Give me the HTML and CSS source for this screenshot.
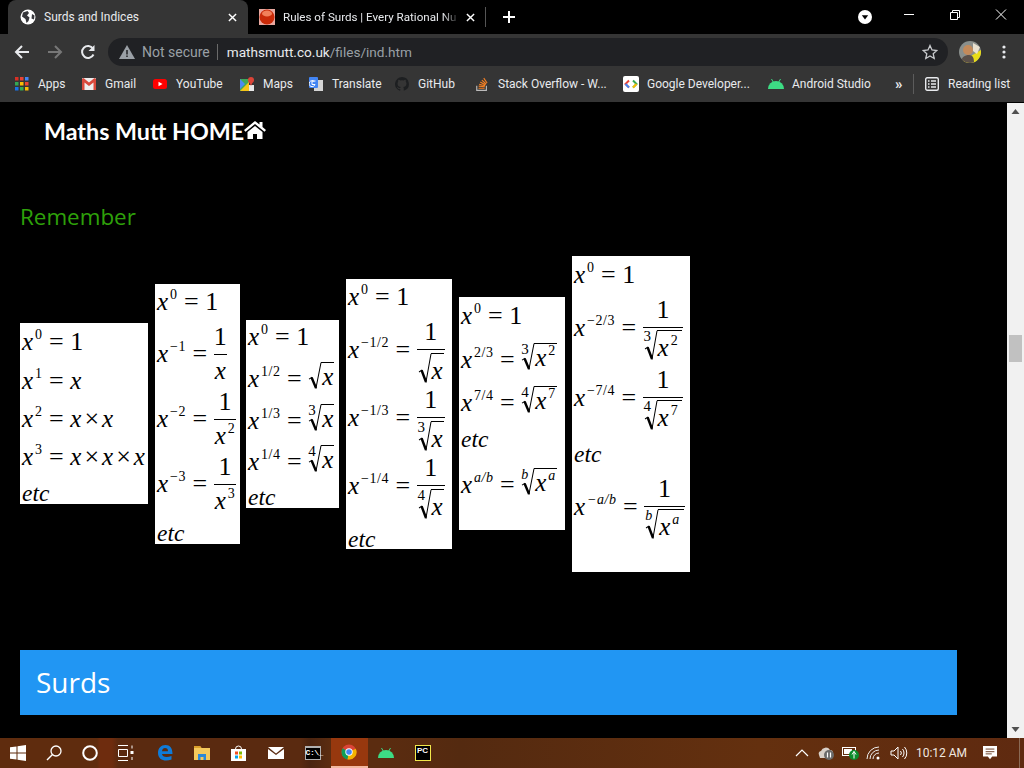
FILE: index.html
```html
<!DOCTYPE html>
<html lang="en">
<head>
<meta charset="utf-8">
<title>Surds and Indices</title>
<link rel="stylesheet" href="styles.css">
</head>
<body>
<svg class="sprite" aria-hidden="true"><defs>
<g id="surd"><path d="M1 16.5 3.6 15 8 25 13 .7" fill="none" stroke="#000" stroke-width="1"/><path d="M3.6 15 8 25" fill="none" stroke="#000" stroke-width="2.4"/></g>
</defs></svg>
<div class="window">
  <div class="tabstrip">
    <div class="tab tab-active">
      <svg class="fav" viewBox="0 0 16 16"><circle cx="8" cy="8" r="7.5" fill="#fff"/><path d="M3 3.5 7.5 2 9 4 7 6.5 9.5 8.5 8.5 12 6.5 14 5.5 10 2 7.5ZM12 5l2.500 1.500L14 10.500 11.500 9.500Z" fill="#35363a"/></svg>
      <span class="tab-title">Surds and Indices</span>
      <svg class="tab-x" viewBox="0 0 10 10"><path d="M1 1l8 8M9 1l-8 8" stroke="#fff" stroke-width="1.600"/></svg>
    </div>
    <div class="tab tab-other">
      <svg class="fav" viewBox="0 0 16 16"><rect width="16" height="16" fill="#e9a8a0"/><circle cx="8" cy="8" r="7.500" fill="#c92a08"/><ellipse cx="8" cy="4.500" rx="5" ry="3" fill="#f2805a"/></svg>
      <span class="tab-title tab-fade">Rules of Surds | Every Rational Nu</span>
      <svg class="tab-x" viewBox="0 0 10 10"><path d="M1 1l8 8M9 1l-8 8" stroke="#fff" stroke-width="1.600"/></svg>
    </div>
    <svg class="newtab" viewBox="0 0 12 12"><path d="M6 0v12M0 6h12" stroke="#fff" stroke-width="2"/></svg>
    <svg class="tabsearch" viewBox="0 0 14 14"><circle cx="7" cy="7" r="7" fill="#fff"/><path d="M3.800 5.200h6.400L7 9.500Z" fill="#000"/></svg>
    <svg class="winbtn" viewBox="0 0 46 30"><path d="M18 14.500h10" stroke="#fff"/></svg>
    <svg class="winbtn" viewBox="0 0 46 30"><path d="M18.500 12.500h7v7h-7zM20.500 12.500v-2h7v7h-2" fill="none" stroke="#fff"/></svg>
    <svg class="winbtn" viewBox="0 0 46 30"><path d="M18 9.500l10 10M28 9.500l-10 10" stroke="#fff"/></svg>
  </div>
  <div class="toolbar">
    <svg class="nav nav-first" viewBox="0 0 16 16"><path d="M15 8H2M8 2 2 8l6 6" fill="none" stroke="#e8eaed" stroke-width="2"/></svg>
    <svg class="nav" viewBox="0 0 16 16"><path d="M1 8h13M8 2l6 6-6 6" fill="none" stroke="#777" stroke-width="2"/></svg>
    <svg class="nav" viewBox="0 0 16 16"><path d="M13.500 10.500A6 6 0 1 1 13 4.500" fill="none" stroke="#e8eaed" stroke-width="2"/><path d="M14.500 1v6h-6z" fill="#e8eaed"/></svg>
    <div class="omnibox">
      <svg class="warn" viewBox="0 0 16 14"><path d="M8 0 16 14H0Z" fill="#9aa0a6"/><path d="M8 5v4.500M8 10.500v1.500" stroke="#202124" stroke-width="1.500"/></svg>
      <span class="notsecure">Not secure</span>
      <span class="omni-sep"></span>
      <span class="url"><b>mathsmutt.co.uk</b>/files/ind.htm</span>
      <svg class="star" viewBox="0 0 16 16"><path d="M8 1.500 10 6l4.800.5-3.600 3.200 1 4.800L8 12l-4.200 2.500 1-4.800L1.200 6.500 6 6Z" fill="none" stroke="#c8cacd" stroke-width="1.300"/></svg>
    </div>
    <svg class="avatar" viewBox="0 0 22 22"><defs><clipPath id="av"><circle cx="11" cy="11" r="11"/></clipPath></defs><g clip-path="url(#av)"><rect width="22" height="22" fill="#8a8f8c"/><path d="M0 22 22 9v13z" fill="#e8dc18"/><circle cx="9" cy="9" r="5" fill="#c48a5a"/><path d="M2 22c0-6 4-8 8-8s5 3 5 8z" fill="#5a4f48"/><path d="M14 2l7 4-3 7-4-3z" fill="#e8e0d0"/></g></svg>
    <svg class="kebab" viewBox="0 0 4 14"><circle cx="2" cy="2" r="1.600" fill="#e8eaed"/><circle cx="2" cy="7" r="1.600" fill="#e8eaed"/><circle cx="2" cy="12" r="1.600" fill="#e8eaed"/></svg>
  </div>
  <div class="bookmarks">
    <div class="bm bm-apps"><svg class="bm-ico" viewBox="0 0 14 14"><g><rect width="3.500" height="3.500" fill="#d93025"/><rect x="5" width="3.500" height="3.500" fill="#ea4335"/><rect x="10" width="3.500" height="3.500" fill="#4285f4"/><rect y="5" width="3.500" height="3.500" fill="#34a853"/><rect x="5" y="5" width="3.500" height="3.500" fill="#fbbc05"/><rect x="10" y="5" width="3.500" height="3.500" fill="#ea4335"/><rect y="10" width="3.500" height="3.500" fill="#1a73e8"/><rect x="5" y="10" width="3.500" height="3.500" fill="#34a853"/><rect x="10" y="10" width="3.500" height="3.500" fill="#fbbc05"/></g></svg><span>Apps</span></div>
    <div class="bm bm-gmail"><svg class="bm-ico" viewBox="0 0 14 12"><rect width="14" height="12" rx="1" fill="#eee"/><path d="M0 1v11h2.500V4.500L7 8l4.500-3.500V12H14V1L12.500 0 7 4.500 1.500 0Z" fill="#d9493c"/></svg><span>Gmail</span></div>
    <div class="bm bm-yt"><svg class="bm-ico" viewBox="0 0 14 10"><rect width="14" height="10" rx="2.500" fill="#f00"/><path d="M5.500 2.800v4.400L9.500 5Z" fill="#fff"/></svg><span>YouTube</span></div>
    <div class="bm bm-maps"><svg class="bm-ico" viewBox="0 0 14 14"><path d="M0 2h9v12H0Z" fill="#3fa85a"/><path d="M0 14 9 5v9Z" fill="#f5c518"/><path d="M0 2 5 7 0 12Z" fill="#4a8af4"/><path d="M9 8h5v6H9Z" fill="#e8e8e8"/><circle cx="11" cy="3" r="3" fill="#db4437"/><path d="M9 4.500 11 9l2-4.500Z" fill="#db4437"/></svg><span>Maps</span></div>
    <div class="bm bm-translate"><svg class="bm-ico" viewBox="0 0 14 14"><rect x="5" y="3" width="9" height="11" fill="#d5d5d5"/><rect width="9" height="11" rx="1" fill="#4285f4"/><path d="M6.500 4H3v3.500h3a3 3 0 1 1-.8-3" fill="none" stroke="#fff"/></svg><span>Translate</span></div>
    <div class="bm bm-gh"><svg class="bm-ico" viewBox="0 0 16 16"><path fill="#1d1f21" d="M8 0a8 8 0 0 0-2.500 15.600c.4.100.5-.2.500-.4v-1.400c-2.200.5-2.700-1-2.700-1-.4-.9-.9-1.200-.9-1.200-.7-.5.100-.5.100-.5.800.100 1.200.8 1.200.8.700 1.200 1.900.9 2.300.7.100-.5.300-.9.500-1.100-1.800-.2-3.600-.9-3.600-4 0-.9.300-1.600.8-2.100-.1-.2-.4-1 .1-2.100 0 0 .7-.2 2.200.8a7.600 7.600 0 0 1 4 0c1.500-1 2.200-.8 2.200-.8.400 1.100.200 1.900.1 2.100.5.600.8 1.300.8 2.100 0 3.100-1.900 3.700-3.700 3.900.3.300.6.800.6 1.500v2.200c0 .2.100.5.600.4A8 8 0 0 0 8 0Z"/></svg><span>GitHub</span></div>
    <div class="bm bm-so"><svg class="bm-ico" viewBox="0 0 14 16"><path d="M1 10v5.300h11V10" fill="none" stroke="#bcbbbb" stroke-width="1.300"/><path d="M3 12.800h7M3.200 10.500l6.900.7M3.700 8.200l6.700 1.800M5 5.800l6 3.200M6.800 3.500l5 4.500M9 1.300l3.800 5.500" stroke="#f48024" stroke-width="1.300"/></svg><span>Stack Overflow - W...</span></div>
    <div class="bm bm-gdev"><svg class="bm-ico bm-ico-lg" viewBox="0 0 16 16"><rect width="16" height="16" rx="2" fill="#fff"/><path d="M6 4.500 2.500 8 6 11.500" fill="none" stroke="#ea4335" stroke-width="2"/><path d="M10 4.500 13.500 8 10 11.500" fill="none" stroke="#34a853" stroke-width="2"/><path d="M2.500 8 6 11.500" stroke="#4285f4" stroke-width="2"/><path d="M13.500 8 10 11.500" stroke="#fbbc05" stroke-width="2"/></svg><span>Google Developer...</span></div>
    <div class="bm bm-android"><svg class="bm-ico bm-ico-lg" viewBox="0 0 16 10"><path d="M0 10a8 8 0 0 1 16 0Z" fill="#3ddc84"/><path d="M3.500 0l2 3.500M12.500 0l-2 3.500" stroke="#3ddc84"/></svg><span>Android Studio</span></div>
    <span class="bm-more">»</span>
    <span class="bm-sep"></span>
    <div class="bm bm-reading"><svg class="bm-ico" viewBox="0 0 14 14"><rect x=".7" y=".7" width="12.600" height="12.600" rx="1.500" fill="none" stroke="#e8eaed" stroke-width="1.400"/><path d="M3 4h1.500M6 4h5M3 7h1.500M6 7h5M3 10h1.500M6 10h5" stroke="#e8eaed" stroke-width="1.300"/></svg><span>Reading list</span></div>
  </div>
  <div class="viewport">
    <main class="page">
      <a class="home">Maths Mutt HOME<svg class="home-ico" viewBox="0 0 22 18"><path d="M11 0 0 9l1.500 1.800L11 3l9.500 7.800L22 9l-3.500-3V1h-3v2.500Z" fill="#fff"/><path d="M11 5 3.500 11v7H9v-5h4v5h5.500v-7Z" fill="#fff"/></svg></a>
      <h2 class="remember">Remember</h2>
      <div class="gallery">
        <div class="card c1">
          <div class="row h32"><span class="m"><i>x</i><sup>0</sup> = 1</span></div>
          <div class="row h39"><span class="m"><i>x</i><sup>1</sup> = <i>x</i></span></div>
          <div class="row h38"><span class="m"><i>x</i><sup>2</sup> = <i>x</i><span class="op">×</span><i>x</i></span></div>
          <div class="row h38"><span class="m"><i>x</i><sup>3</sup> = <i>x</i><span class="op">×</span><i>x</i><span class="op">×</span><i>x</i></span></div>
          <div class="row h36"><span class="m"><i class="etc">etc</i></span></div>
        </div>
        <div class="card c2">
          <div class="row h38 pb7"><span class="m"><i>x</i><sup>0</sup> = 1</span></div>
          <div class="row f h65"><span class="m"><i>x</i><sup>−1</sup> = </span><span class="frac"><span class="num">1</span><span class="den"><i>x</i></span></span></div>
          <div class="row f h65"><span class="m"><i>x</i><sup>−2</sup> = </span><span class="frac"><span class="num">1</span><span class="den"><i>x</i><sup>2</sup></span></span></div>
          <div class="row f h65"><span class="m"><i>x</i><sup>−3</sup> = </span><span class="frac"><span class="num">1</span><span class="den"><i>x</i><sup>3</sup></span></span></div>
          <div class="row h29"><span class="m"><i class="etc">etc</i></span></div>
        </div>
        <div class="card c3">
          <div class="row h30"><span class="m"><i>x</i><sup>0</sup> = 1</span></div>
          <div class="row h42"><span class="m"><i>x</i><sup>1/2</sup> = </span><span class="rad"><svg class="surd" viewBox="0 0 14 26" preserveAspectRatio="none"><use href="#surd"/></svg><span class="radicand"><i>x</i></span></span></div>
          <div class="row h42"><span class="m"><i>x</i><sup>1/3</sup> = </span><span class="rad"><span class="idx">3</span><svg class="surd" viewBox="0 0 14 26" preserveAspectRatio="none"><use href="#surd"/></svg><span class="radicand"><i>x</i></span></span></div>
          <div class="row h41"><span class="m"><i>x</i><sup>1/4</sup> = </span><span class="rad"><span class="idx">4</span><svg class="surd" viewBox="0 0 14 26" preserveAspectRatio="none"><use href="#surd"/></svg><span class="radicand"><i>x</i></span></span></div>
          <div class="row h35"><span class="m"><i class="etc">etc</i></span></div>
        </div>
        <div class="card c4">
          <div class="row h37 pb6"><span class="m"><i>x</i><sup>0</sup> = 1</span></div>
          <div class="row f h68"><span class="m"><i>x</i><sup>−1/2</sup> = </span><span class="frac"><span class="num">1</span><span class="den"><span class="rad"><svg class="surd" viewBox="0 0 14 26" preserveAspectRatio="none"><use href="#surd"/></svg><span class="radicand"><i>x</i></span></span></span></span></div>
          <div class="row f h68"><span class="m"><i>x</i><sup>−1/3</sup> = </span><span class="frac"><span class="num">1</span><span class="den"><span class="rad"><span class="idx">3</span><svg class="surd" viewBox="0 0 14 26" preserveAspectRatio="none"><use href="#surd"/></svg><span class="radicand"><i>x</i></span></span></span></span></div>
          <div class="row f h68"><span class="m"><i>x</i><sup>−1/4</sup> = </span><span class="frac"><span class="num">1</span><span class="den"><span class="rad"><span class="idx">4</span><svg class="surd" viewBox="0 0 14 26" preserveAspectRatio="none"><use href="#surd"/></svg><span class="radicand"><i>x</i></span></span></span></span></div>
          <div class="row h32"><span class="m"><i class="etc">etc</i></span></div>
        </div>
        <div class="card c5">
          <div class="row h32"><span class="m"><i>x</i><sup>0</sup> = 1</span></div>
          <div class="row h44"><span class="m"><i>x</i><sup>2/3</sup> = </span><span class="rad"><span class="idx">3</span><svg class="surd" viewBox="0 0 14 26" preserveAspectRatio="none"><use href="#surd"/></svg><span class="radicand"><i>x</i><sup>2</sup></span></span></div>
          <div class="row h43"><span class="m"><i>x</i><sup>7/4</sup> = </span><span class="rad"><span class="idx">4</span><svg class="surd" viewBox="0 0 14 26" preserveAspectRatio="none"><use href="#surd"/></svg><span class="radicand"><i>x</i><sup>7</sup></span></span></div>
          <div class="row h36"><span class="m"><i class="etc">etc</i></span></div>
          <div class="row h46"><span class="m"><i>x</i><sup><i>a/b</i></sup> = </span><span class="rad"><span class="idx"><i>b</i></span><svg class="surd" viewBox="0 0 14 26" preserveAspectRatio="none"><use href="#surd"/></svg><span class="radicand"><i>x</i><sup><i>a</i></sup></span></span></div>
        </div>
        <div class="card c6">
          <div class="row h37 pb5"><span class="m"><i>x</i><sup>0</sup> = 1</span></div>
          <div class="row f h70"><span class="m"><i>x</i><sup>−2/3</sup> = </span><span class="frac"><span class="num">1</span><span class="den"><span class="rad"><span class="idx">3</span><svg class="surd" viewBox="0 0 14 26" preserveAspectRatio="none"><use href="#surd"/></svg><span class="radicand"><i>x</i><sup>2</sup></span></span></span></span></div>
          <div class="row f h70"><span class="m"><i>x</i><sup>−7/4</sup> = </span><span class="frac"><span class="num">1</span><span class="den"><span class="rad"><span class="idx">4</span><svg class="surd" viewBox="0 0 14 26" preserveAspectRatio="none"><use href="#surd"/></svg><span class="radicand"><i>x</i><sup>7</sup></span></span></span></span></div>
          <div class="row h34"><span class="m"><i class="etc">etc</i></span></div>
          <div class="row f h80"><span class="m"><i>x</i><sup><i>−a/b</i></sup> = </span><span class="frac"><span class="num">1</span><span class="den"><span class="rad"><span class="idx"><i>b</i></span><svg class="surd" viewBox="0 0 14 26" preserveAspectRatio="none"><use href="#surd"/></svg><span class="radicand"><i>x</i><sup><i>a</i></sup></span></span></span></span></div>
        </div>
      </div>
      <div class="banner">Surds</div>
    </main>
    <div class="scrollbar">
      <svg class="sb-arrow" viewBox="0 0 17 17"><path d="M8.500 6 12.500 11h-8Z" fill="#505050"/></svg>
      <div class="sb-track"><div class="sb-thumb"></div></div>
      <svg class="sb-arrow" viewBox="0 0 17 17"><path d="M8.500 11 4.500 6h8Z" fill="#505050"/></svg>
    </div>
  </div>
  <div class="taskbar">
    <div class="slot"><svg class="tb16" viewBox="0 0 16 16"><path d="M0 2.300 6.500 1.400V7.500H0ZM7.500 1.200 16 0V7.500H7.500ZM0 8.500H6.500V14.600L0 13.700ZM7.500 8.500H16V16L7.500 14.800Z" fill="#fff"/></svg></div>
    <div class="slot"><svg class="tb16" viewBox="0 0 16 16"><circle cx="10" cy="6" r="5" fill="none" stroke="#fff" stroke-width="1.300"/><path d="M6.500 9.500 1 15" stroke="#fff" stroke-width="1.500"/></svg></div>
    <div class="slot"><svg class="tb16" viewBox="0 0 16 16"><circle cx="8" cy="8" r="6.800" fill="none" stroke="#fff" stroke-width="2"/></svg></div>
    <div class="slot"><svg class="tb16" viewBox="0 0 16 16"><path d="M0 .5h10M0 15.500h10M.5 4.500h9v7h-9zM14 .5v3M14 12v3" fill="none" stroke="#fff"/><rect x="12.500" y="6" width="3" height="3" fill="#fff"/></svg></div>
    <div class="apps">
      <div class="slot2"><svg class="tb16" viewBox="0 0 16 16"><path d="M1 8C1 3 4 0 8.500 0 13 0 15.500 3 15.500 9H5c.3 3 4.500 4 9.500 2v3.500C8 17 1 15 1 8Zm4-1.700h6C11 4 10 3 8 3 6.500 3 5.300 4 5 6.300Z" fill="#0f7bd8"/></svg></div>
      <div class="slot2"><svg class="tb16" viewBox="0 0 16 14"><path d="M0 0h6l1.500 2H16v12H0Z" fill="#f4c95d"/><path d="M0 0h6l1.500 2H0Z" fill="#d99f2b"/><path d="M4 8h8v6H9.500v-3h-3v3H4Z" fill="#2b88d8"/></svg></div>
      <div class="slot2"><svg class="tb16" viewBox="0 0 16 16"><rect y="4" width="15" height="12" fill="#fff"/><path d="M4.500 4a3 3 0 0 1 6 0" fill="none" stroke="#fff"/><rect x="4" y="6.500" width="3" height="3" fill="#f25022"/><rect x="8" y="6.500" width="3" height="3" fill="#7fba00"/><rect x="4" y="10.500" width="3" height="3" fill="#00a4ef"/><rect x="8" y="10.500" width="3" height="3" fill="#ffb900"/></svg></div>
      <div class="slot2"><svg class="tb16" viewBox="0 0 16 12"><path d="M0 0h16L8 6.500Z" fill="#fff"/><path d="M0 2v10h16V2L8 8Z" fill="#fff"/></svg></div>
      <div class="slot2"><span class="cmd">C:\_</span></div>
      <div class="slot2 slot-active"><svg class="tb16" viewBox="0 0 16 16"><circle cx="8" cy="8" r="7.500" fill="#db4437"/><path d="M8 8 1.500 4.300A7.500 7.500 0 0 0 6.500 15.400Z" fill="#0f9d58"/><path d="M8 8l6.800-3.200A7.500 7.500 0 0 1 6.500 15.400Z" fill="#f4b400"/><circle cx="8" cy="8" r="3.700" fill="#fff"/><circle cx="8" cy="8" r="2.800" fill="#4285f4"/></svg></div>
      <div class="slot2"><svg class="tb16" viewBox="0 0 16 10"><path d="M0 10a8 8 0 0 1 16 0Z" fill="#3ddc84"/><path d="M3.500 0l2 3.500M12.500 0l-2 3.500" stroke="#3ddc84"/></svg></div>
      <div class="slot2"><span class="pycharm">PC</span></div>
    </div>
    <div class="tray">
      <div class="t-item t24"><svg class="t14" viewBox="0 0 14 8"><path d="M1 7l6-6 6 6" fill="none" stroke="#fff" stroke-width="1.200"/></svg></div>
      <div class="t-item t24"><svg class="t18" viewBox="0 0 18 14"><path d="M2 9a3 3 0 0 1 2-4 5 5 0 0 1 9-1 3 3 0 0 1 3 3H9v5H3Z" fill="#d8d0c8"/><circle cx="12" cy="9" r="5" fill="#6a6a6a"/><path d="M10.500 6.500v5M13.500 6.500v5" stroke="#fff" stroke-width="1.200"/></svg></div>
      <div class="t-item t25"><svg class="t18" viewBox="0 0 18 14"><rect x=".5" y="1.500" width="13" height="8" fill="none" stroke="#fff"/><rect x="2" y="3" width="8" height="5" fill="#fff"/><circle cx="12" cy="9" r="5" fill="#0b8a2a"/><path d="M12 5.500v7M10 8.500l2-3 2 3" fill="none" stroke="#fff"/></svg></div>
      <div class="t-item t24"><svg class="t18" viewBox="0 0 18 14"><path d="M1 13a12 12 0 0 1 12-12M4 13a9 9 0 0 1 9-9M7 13a6 6 0 0 1 6-6" fill="none" stroke="#eee"/><circle cx="12" cy="12" r="1.500" fill="#fff"/></svg></div>
      <div class="t-item t24"><svg class="t18" viewBox="0 0 18 14"><path d="M1 5h3l4-4v12l-4-4H1Z" fill="none" stroke="#fff"/><path d="M10.500 5a3 3 0 0 1 0 4M12.500 3a6 6 0 0 1 0 8M14.500 1a9 9 0 0 1 0 12" fill="none" stroke="#fff"/></svg></div>
      <span class="clock">10:12 AM</span>
      <div class="t-item t36"><svg class="t18" viewBox="0 0 16 16"><path d="M0 0h16v12h-5.500L8 15l-2.500-3H0Z" fill="#fff"/><path d="M3 3.500h10M3 6.500h10M3 9h7" stroke="#5a2a10"/></svg></div>
      <div class="showdesk"></div>
    </div>
  </div>
</div>
</body>
</html>
```
FILE: styles.css
```css
* { box-sizing: border-box; }
html, body { margin: 0; height: 100%; overflow: hidden; background: #000; }
.sprite { position: absolute; width: 0; height: 0; }
.window { width: 1024px; height: 768px; display: flex; flex-direction: column; font-family: Roboto, "Noto Sans", sans-serif; }

.tabstrip { height: 34px; background: #000; display: flex; align-items: center; padding-left: 8px; flex: none; }
.tab { height: 34px; display: flex; align-items: center; color: #e8eaed; font-size: 12px; flex: none; }
.tab-active { width: 240px; background: #353535; border-radius: 8px 8px 0 0; padding: 0 9.500px 0 12px; }
.tab-other { width: 238px; padding: 0 8px 0 11px; border-right: 1px solid #555; height: 20px; }
.fav { width: 16px; height: 16px; flex: none; margin-right: 8px; }
.tab-title { flex: 1; white-space: nowrap; overflow: hidden; }
.tab-fade { font-size: 11.600px; -webkit-mask-image: linear-gradient(90deg, #000 90%, transparent); mask-image: linear-gradient(90deg, #000 90%, transparent); }
.tab-x { width: 9px; height: 9px; flex: none; margin-left: 6px; margin-right: 2px; }
.newtab { width: 12px; height: 12px; margin-left: 17px; flex: none; }
.tabsearch { width: 14px; height: 14px; margin-left: 343px; flex: none; }
.winbtn { width: 46px; height: 30px; flex: none; align-self: flex-start; }
.tabsearch + .winbtn { margin-left: 14px; }

.toolbar { height: 38px; background: #353535; display: flex; align-items: center; flex: none; padding-bottom: 2px; }
.nav { width: 16px; height: 16px; margin-right: 17px; flex: none; }
.nav-first { margin-left: 14px; }
.omnibox { width: 840px; height: 28px; margin-left: -5px; background: #202124; border-radius: 14px; display: flex; align-items: center; padding-left: 11px; font-size: 14px; color: #9aa0a6; flex: none; }
.warn { width: 16px; height: 14px; flex: none; }
.notsecure { margin-left: 7px; }
.omni-sep { width: 1px; height: 16px; background: #6a6a6a; margin: 0 9px 0 7px; }
.url { flex: 1; font-size: 13.600px; }
.url b { font-weight: 400; color: #e8eaed; }
.star { width: 16px; height: 16px; margin-right: 10px; flex: none; }
.avatar { width: 22px; height: 22px; margin-left: 11px; flex: none; }
.kebab { width: 4px; height: 14px; margin-left: 21px; flex: none; }

.bookmarks { height: 30px; background: #353535; display: flex; align-items: center; font-size: 12px; color: #e8eaed; flex: none; padding: 0 0 6px 15px; margin-bottom: 1px; }
.bm { display: flex; align-items: center; white-space: nowrap; flex: none; }
.bm-ico { width: 14px; height: 14px; margin-right: 9px; flex: none; }
.bm-ico-lg { width: 16px; height: 16px; margin-right: 8px; }
.bm-apps { width: 67px; } .bm-gmail { width: 71px; } .bm-yt { width: 87px; } .bm-maps { width: 69px; }
.bm-translate { width: 86px; } .bm-gh { width: 80px; } .bm-so { width: 148px; } .bm-gdev { width: 145px; } .bm-android { width: 127px; }
.bm-more { font-size: 15px; font-weight: 700; width: 18px; flex: none; }
.bm-sep { width: 1px; height: 20px; background: #5c5c5c; flex: none; margin-right: 11px; }
.bm-reading { flex: none; }

.viewport { flex: 1; display: flex; min-height: 0; background: #000; }
.page { flex: 1; min-width: 0; padding: 0 50px 0 20px; overflow: hidden; }
.home { display: flex; align-items: center; margin-left: 24px; height: 56px; color: #fff; font-family: Lato, sans-serif; font-weight: 700; font-size: 23.300px; }
.home-ico { width: 22px; height: 18px; margin-bottom: 2px; flex: none; }
.remember { margin: 41px 0 0; height: 34px; line-height: 34px; font-weight: 400; font-size: 22.400px; color: #2ea00a; font-family: "Open Sans", sans-serif; }
.gallery { display: flex; align-items: center; gap: 7px; margin-top: 22px; font-family: "Liberation Serif", serif; color: #000; }
.card { background: #fff; flex: none; padding-left: 2px; font-size: 26px; }
.c1 { width: 128px; height: 181px; margin-bottom: 1px; } .c2 { width: 85px; height: 260px; } .c3 { width: 93px; height: 188px; margin-left: -1px; }
.c4 { width: 106px; height: 270px; } .c5 { width: 106px; height: 233px; margin-bottom: 1px; } .c6 { width: 118px; height: 316px; }
.row { display: flex; align-items: flex-end; white-space: pre; }
.row.f { align-items: center; }
.h29 { height: 29px; } .h30 { height: 30px; } .h32 { height: 32px; } .h34 { height: 34px; } .h35 { height: 35px; } .h36 { height: 36px; }
.h37 { height: 37px; } .h38 { height: 38px; } .h39 { height: 39px; } .h41 { height: 41px; } .h42 { height: 42px; } .h43 { height: 43px; }
.h44 { height: 44px; } .h46 { height: 46px; } .h65 { height: 65px; } .h68 { height: 68px; } .h70 { height: 70px; } .h80 { height: 80px; }
.pb5 { padding-bottom: 5px; } .pb6 { padding-bottom: 6px; } .pb7 { padding-bottom: 7px; }
.m { line-height: 24px; display: block; flex: none; padding-bottom: 1px; }
.m i, .radicand i, .den i { font-size: 25px; }
.m .etc { font-size: 23.500px; }
.m sup i, .radicand sup i, .idx i { font-size: 14px; }
sup { font-size: 14px; line-height: 0; vertical-align: 11px; letter-spacing: .5px; margin-left: 2px; }
.op { margin: 0 3px; }
.frac { display: flex; flex-direction: column; align-items: center; flex: none; line-height: 24px; }
.num { height: 32px; display: flex; align-items: flex-end; padding-bottom: 5px; width: 100%; justify-content: center; border-bottom: 1px solid #000; }
.den { height: 32px; padding: 4px 1px 0; }
.rad { display: inline-flex; align-items: stretch; position: relative; flex: none; margin-bottom: 3px; }
.den .rad { margin: 0; }
.surd { width: 14px; flex: none; }
.radicand { border-top: 1px solid #000; line-height: 24px; padding: 2px 1px 0; margin-left: -1px; }
.c4 .den { padding-top: 3px; }
.c4 .radicand { padding-top: 5px; }
.c6 .den { padding-top: 2px; }
.c6 .radicand { padding: 5px 4px 0 1px; }
.idx { position: absolute; left: 0; top: -1px; font-size: 15px; line-height: 15px; }

.banner { margin-top: 78px; height: 65px; line-height: 65px; background: #2196f3; color: #fff; padding-left: 16px; font-size: 28px; font-family: "Open Sans", sans-serif; }

.scrollbar { width: 17px; flex: none; background: #f1f1f1; display: flex; flex-direction: column; }
.sb-arrow { width: 17px; height: 17px; flex: none; }
.sb-track { flex: 1; padding: 215px 2px 0; }
.sb-thumb { height: 27px; background: #c1c1c1; }

.taskbar { height: 30px; flex: none; display: flex; align-items: stretch; background: linear-gradient(90deg, #5f2c0e 0, #5f2c0e 97px, #6e2c0e 100px, #6e2c0e 112px, #5a2a10 118px, #5a2a10 300px, #4a2410 310px, #5b2c10 330px, #5b2c10 380px, #542a10 460px, #64300f 760px, #5f2a10 1024px); }
.slot { width: 36px; display: flex; align-items: center; justify-content: center; flex: none; }
.slot2 { width: 36.800px; display: flex; align-items: center; justify-content: center; flex: none; }
.apps { display: flex; margin-left: 3px; }
.slot-active { background: #97380e; border-bottom: 2px solid #f3b8a0; }
.tb16 { width: 16px; height: 16px; }
.cmd { width: 16px; height: 14px; background: #000; border: 1px solid #b0b0b0; border-top-width: 2px; color: #fff; font: 700 8px/10px "Liberation Mono", monospace; text-align: center; letter-spacing: -.5px; }
.pycharm { width: 16px; height: 16px; background: #000; border: 1px solid #f2e84b; color: #fff; font: 700 8px/10px "Liberation Sans", sans-serif; padding-left: 1px; }
.tray { margin-left: auto; display: flex; align-items: center; height: 100%; }
.t-item { display: flex; align-items: center; justify-content: center; flex: none; }
.t24 { width: 24px; } .t25 { width: 25px; } .t36 { width: 36px; }
.t14 { width: 14px; height: 8px; } .t18 { width: 18px; height: 14px; }
.clock { width: 61px; color: #f0e8e0; font-size: 12px; text-align: center; flex: none; }
.showdesk { width: 12px; height: 100%; border-right: 1px solid #8a6a55; margin-right: 4px; }
```
